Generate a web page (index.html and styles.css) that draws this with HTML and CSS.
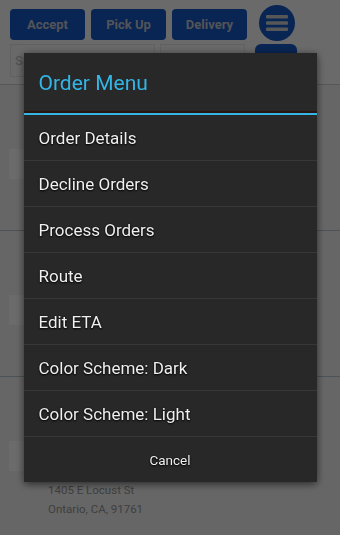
FILE: index.html
```html
<!DOCTYPE html>
<html lang="en">
<head>
  <meta charset="UTF-8">
  <meta name="viewport" content="width=device-width, initial-scale=1.0">
  <title>Orders</title>
  <link rel="stylesheet" href="styles.css">
</head>
<body>
  <div class="page">
    <div class="top">
      <div class="toolbar">
        <button class="action-btn">Accept</button>
        <button class="action-btn">Pick Up</button>
        <button class="action-btn">Delivery</button>
        <button class="menu-btn">
          <svg width="22" height="18" viewBox="0 0 22 18">
            <rect x="0" y="1" width="22" height="3.5" rx="1" fill="#d0d0d0"/>
            <rect x="0" y="7.25" width="22" height="3.5" rx="1" fill="#d0d0d0"/>
            <rect x="0" y="13.5" width="22" height="3.5" rx="1" fill="#d0d0d0"/>
          </svg>
        </button>
      </div>
      <div class="search-row">
        <div class="field field-wide">S</div>
        <div class="field field-small"></div>
        <div class="go-btn"></div>
      </div>
    </div>

    <div class="orders">
      <div class="order">
        <div class="thumb"></div>
      </div>
      <div class="order">
        <div class="thumb"></div>
      </div>
      <div class="order last">
        <div class="thumb"></div>
        <div class="order-info">
          <p>1405 E Locust St</p>
          <p>Ontario, CA, 91761</p>
        </div>
      </div>
    </div>
  </div>

  <div class="scrim">
    <div class="dialog">
      <div class="dialog-title">Order Menu</div>
      <div class="dialog-rule"></div>
      <div class="menu-item">Order Details</div>
      <div class="menu-item">Decline Orders</div>
      <div class="menu-item">Process Orders</div>
      <div class="menu-item">Route</div>
      <div class="menu-item">Edit ETA</div>
      <div class="menu-item">Color Scheme: Dark</div>
      <div class="menu-item">Color Scheme: Light</div>
      <div class="dialog-cancel">Cancel</div>
    </div>
  </div>
</body>
</html>
```

FILE: styles.css
```css
html, body {
  margin: 0;
  padding: 0;
}
body {
  font-family: Roboto, "Liberation Sans", sans-serif;
  width: 340px;
  height: 535px;
  overflow: hidden;
  background: #f4f4f4;
}
.page {
  height: 535px;
}
.top {
  background: #fdfdfd;
  padding: 7px 10px 0 10px;
  height: 77px;
  border-bottom: 1px solid #d0d0d0;
}
.toolbar {
  display: flex;
  align-items: center;
  gap: 6px;
}
.action-btn {
  width: 75px;
  height: 31px;
  background: #1458c8;
  border: none;
  border-radius: 4px;
  color: #c4c8d0;
  font-family: Roboto, "Liberation Sans", sans-serif;
  font-size: 13px;
  font-weight: bold;
  padding: 0;
}
.menu-btn {
  width: 36px;
  height: 36px;
  margin-left: 6px;
  border-radius: 50%;
  background: #1458c8;
  border: none;
  padding: 0;
  display: flex;
  align-items: center;
  justify-content: center;
  margin-top: -2px;
}
.search-row {
  display: flex;
  gap: 5px;
  margin-top: 3px;
  height: 33px;
}
.field {
  background: #fafafa;
  border: 1px solid #e6e6e6;
  color: #c0c0c0;
  font-size: 13px;
  line-height: 31px;
  padding-left: 4px;
  box-sizing: border-box;
}
.field-wide {
  width: 145px;
}
.field-small {
  width: 85px;
}
.go-btn {
  width: 42px;
  margin-left: 5px;
  background: #1458c8;
  border-radius: 6px 6px 0 0;
}
.orders {
  background: #f4f4f4;
}
.order {
  display: flex;
  align-items: center;
  gap: 8px;
  padding: 12px 9px 0 9px;
  height: 146px;
  box-sizing: border-box;
  border-bottom: 1px solid #b2c6d2;
}
.order.last {
  align-items: flex-start;
  padding-top: 64px;
  border-bottom: none;
}
.thumb {
  width: 31px;
  height: 30px;
  background: #ffffff;
  flex-shrink: 0;
}
.order-info {
  padding-top: 40px;
}
.order-info p {
  margin: 0;
  font-size: 11.5px;
  line-height: 19px;
  color: #969696;
}
.scrim {
  position: fixed;
  inset: 0;
  background: rgba(0, 0, 0, 0.58);
  display: flex;
  align-items: center;
  justify-content: center;
}
.dialog {
  width: 293px;
  background: #282828;
  box-shadow: 0 2px 8px rgba(0, 0, 0, 0.6);
  color: #f0f0f0;
}
.dialog-title {
  height: 58px;
  line-height: 60px;
  padding-left: 15px;
  font-size: 21px;
  color: #33b5e5;
}
.dialog-rule {
  height: 2px;
  border-top: 2px solid #2a1510;
  background: #33b5e5;
}
.menu-item {
  height: 45px;
  line-height: 46px;
  padding-left: 15px;
  font-size: 17px;
  border-bottom: 1px solid #383838;
  text-shadow: 0 1px 2px #000, 0 0 1px #000;
}
.dialog-cancel {
  height: 45px;
  line-height: 46px;
  text-align: center;
  font-size: 13.5px;
  text-shadow: 0 1px 2px #000, 0 0 1px #000;
}
```
